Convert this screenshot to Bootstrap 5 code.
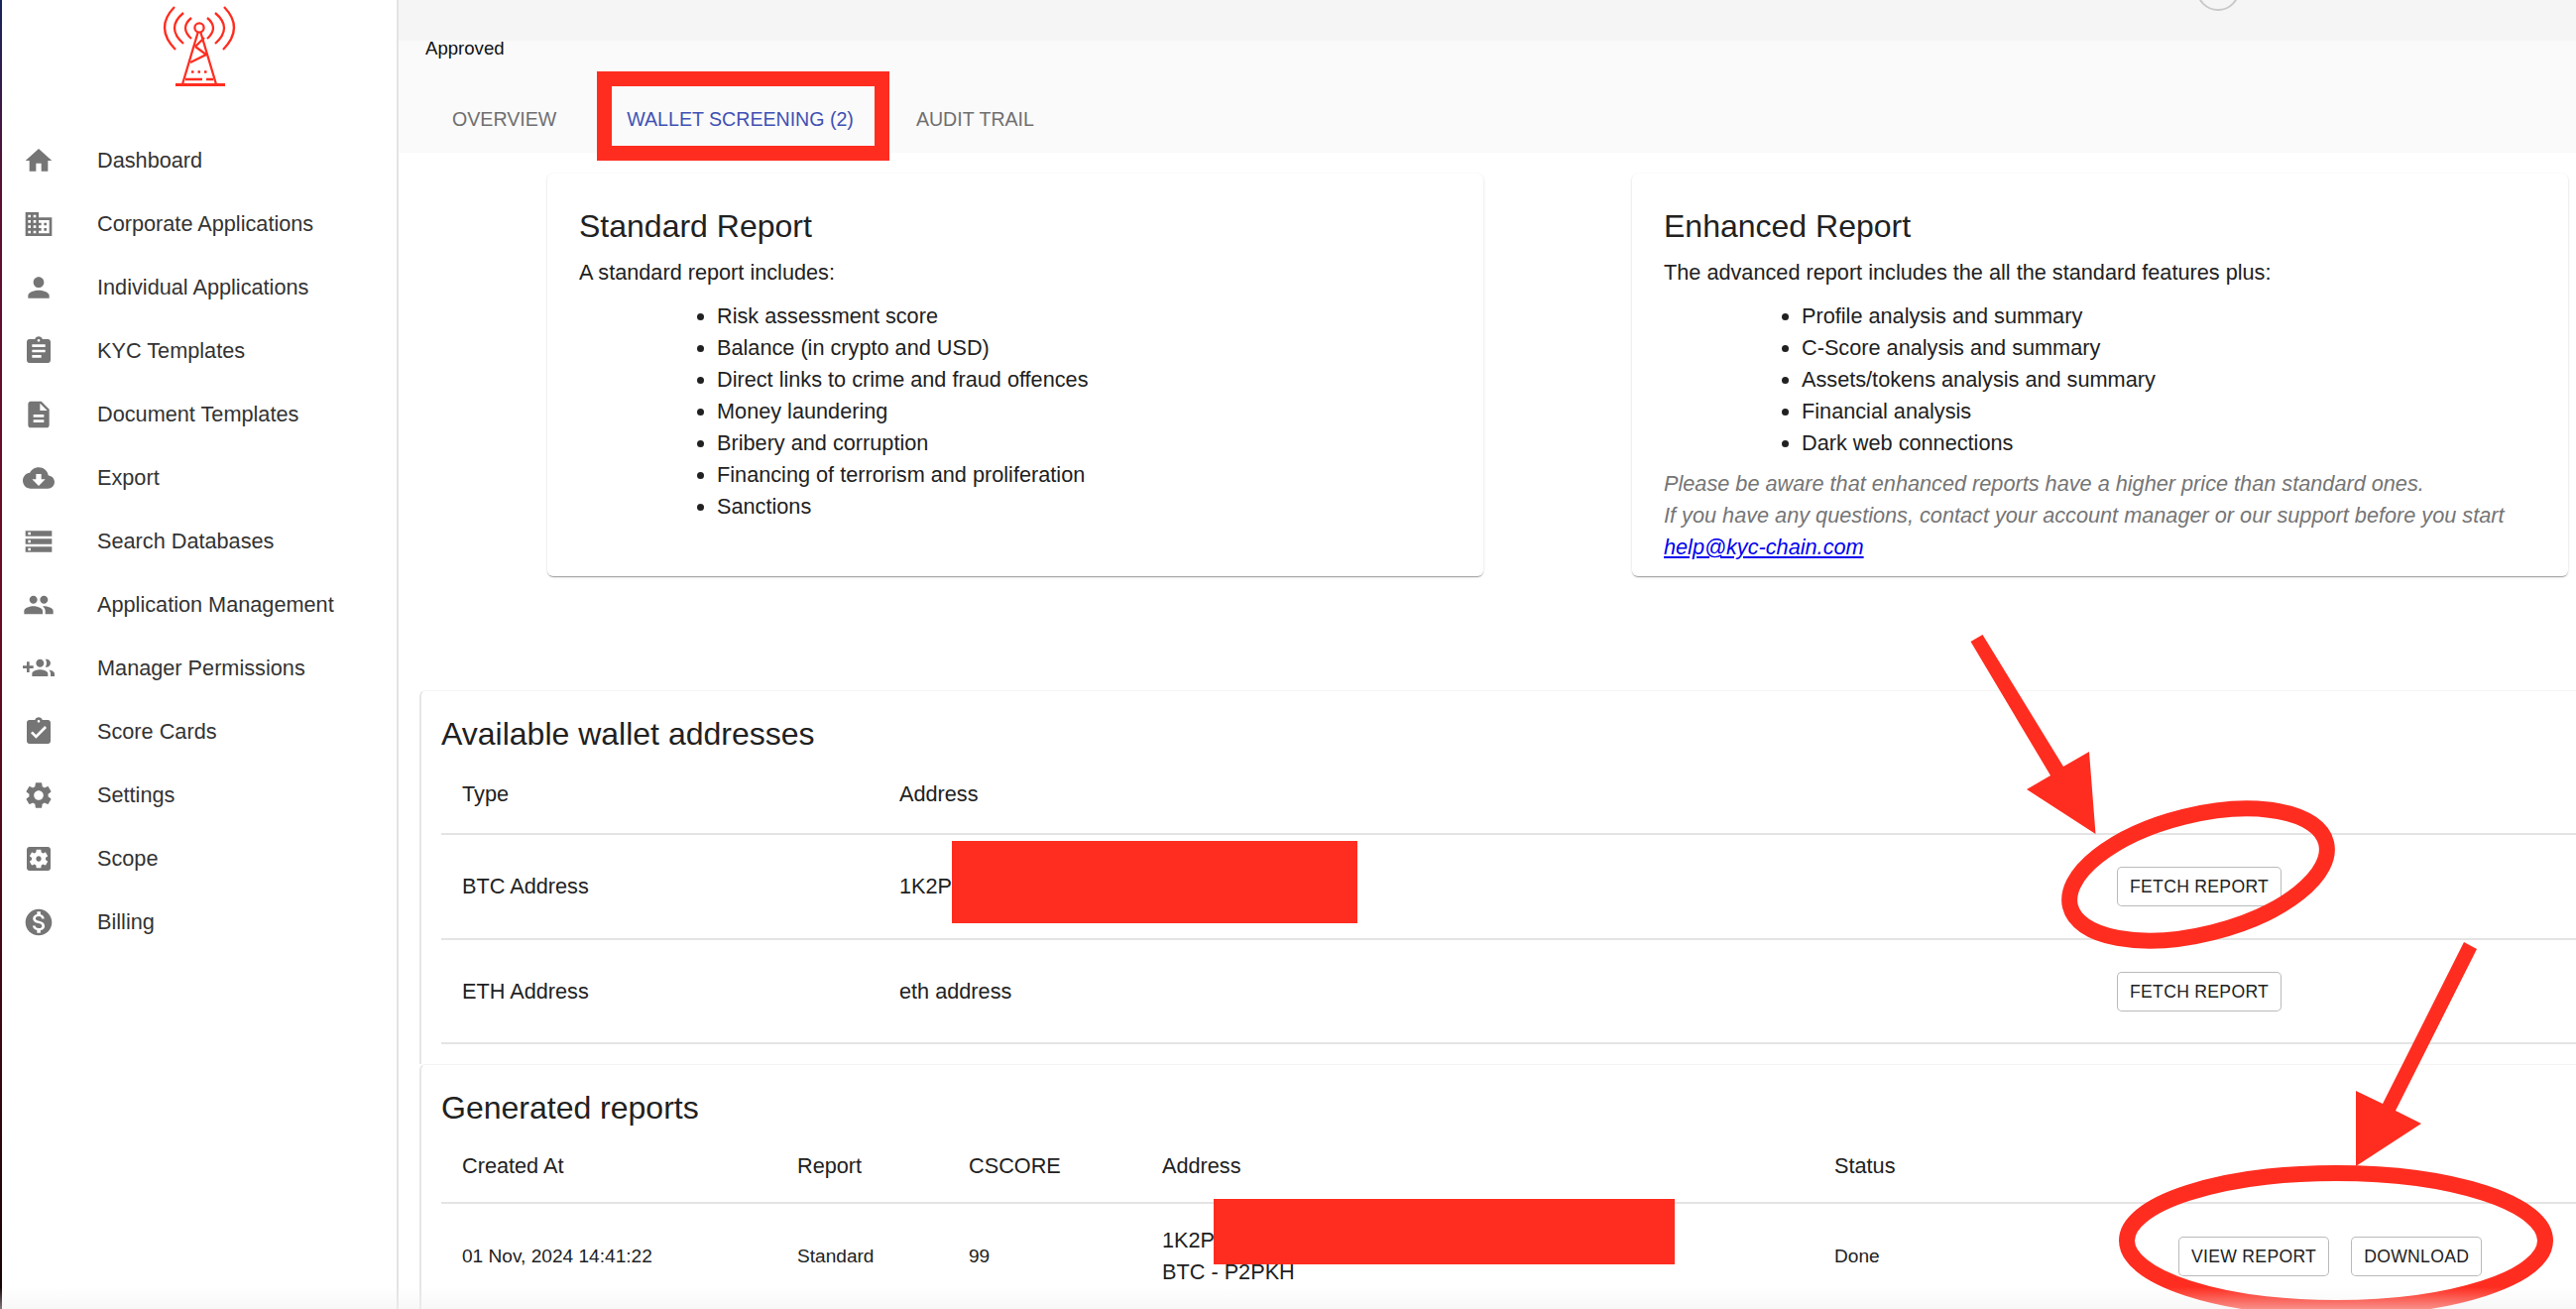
<!DOCTYPE html>
<html lang="en">
<head>
<meta charset="utf-8">
<title>Wallet screening</title>
<link rel="stylesheet" href="https://cdn.jsdelivr.net/npm/bootstrap@5.3.0/dist/css/bootstrap.min.css">
<style>
html,body{height:100%;overflow:hidden;}
body{font-family:"Liberation Sans",Arial,sans-serif;color:#212121;background:#fff;position:relative;font-size:21.7px;line-height:32px;}
.shell{height:1320px;width:2598px;}
.side{width:400px;flex:none;border-left:2px solid;border-image:linear-gradient(180deg,#16265c 0,#5d0f33 15%,#6b0c24 45%,#3a0712 80%,#140406 100%) 1;border-right:0;background:#fff;}
.side-edge{width:2px;flex:none;background:#e3e3e3;}
.brand{display:block;width:100px;height:100px;margin:0 0 30px 148px;}
.side-link{height:64px;display:flex;align-items:center;padding-left:21px;color:#333;text-decoration:none;font-size:21.7px;}
.side-ico{width:32px;height:32px;fill:#757575;flex:none;margin-right:43px;}
.page{flex:1 1 auto;min-width:0;overflow:hidden;}
.topbar{height:41px;background:#f5f5f5;overflow:hidden;padding-right:339px;}
.avatar{width:44px;height:44px;border:2px solid #c9c9c9;border-radius:50%;margin-bottom:30px;flex:none;}
.subbar{height:113px;background:#fafafa;display:flow-root;}
.state{padding:0 0 0 27px;margin-top:-4px;font-size:18.6px;line-height:24px;height:24px;color:#111;}
.tabrow{margin-top:47px;padding-left:54px;}
.tabrow .nav-link{padding:0;font-size:19.6px;line-height:24px;color:#6f6f6f;text-transform:uppercase;}
.tabrow .nav-link.active{color:#3f51b5;}
.tabrow .nav-item:nth-child(1){margin-right:71px;}
.tabrow .nav-item:nth-child(2){margin-right:63px;}
.body-pane{background:#fff;height:1166px;}
.promo-row{padding:21px 8px 0 150px;gap:150px;}
.promo{flex:1 1 0;height:406px;padding:34px 32px 0;border:0;border-radius:6px;box-shadow:0 2px 1px -1px rgba(0,0,0,.2),0 1px 1px rgba(0,0,0,.14),0 1px 3px rgba(0,0,0,.12);}
.promo h4,.sheet h4{font-size:32px;line-height:38px;margin:0;font-weight:400;color:#212121;}
.promo p{margin:12px 0 12px;}
.promo ul{margin:0;padding-left:139px;}
.promo-note{margin:9px 0 0;font-style:italic;color:#757575;}
.promo-note a{color:#0000ee;}
.sheet{border:0;border-left:2px solid #e6e6e6;border-top:1px solid #f4f4f4;border-radius:6px 0 0 0;margin-left:21px;width:2175px;padding:24px 0 0 20px;background:#fff;}
.sheet-a{margin-top:115px;height:377px;}
.sheet-b{height:260px;}
.grid-tb{width:2153px;table-layout:fixed;margin:0;--bs-table-border-color:#e0e0e0;}
.grid-tb th,.grid-tb td{padding:0 0 0 21px;vertical-align:middle;font-weight:400;border-bottom:2px solid #e4e4e4;color:#212121;}
.grid-tb thead th{height:82px;padding-top:3px;}
.sheet-a tbody tr:first-child td{height:106px;}
.sheet-a tbody tr:last-child td{height:105px;}
.sheet-b thead th{height:77px;}
.sheet-b tbody td{height:106px;border-bottom:0;}
.sheet-b tbody td.tiny{font-size:19.1px;}
.w441{width:441px}.w1228{width:1228px}.w484{width:484px}
.w338{width:338px}.w173{width:173px}.w195{width:195px}.w678{width:678px}.w347{width:347px}.w422{width:422px}
.act{height:40px;padding:0 12px;border:1px solid rgba(0,0,0,.27);border-radius:5px;background:#fff;color:#212121;font-size:17.6px;line-height:38px;letter-spacing:.3px;white-space:nowrap;}
.act+.act{margin-left:22px;}
.markup{position:absolute;left:0;top:0;width:2598px;height:1320px;pointer-events:none;}
.foot-fade{position:absolute;left:0;right:0;bottom:0;height:22px;background:linear-gradient(180deg,rgba(240,240,240,0),rgba(240,240,240,.5));pointer-events:none;}
</style>
</head>
<body>
<div class="shell d-flex">
  <aside class="side">
    <svg class="brand" viewBox="0 0 100 100" fill="none" stroke="#ff2d20" stroke-width="2.3" aria-label="logo">
      <circle cx="51" cy="28" r="4.6"/>
      <path d="M26 7Q5.500 28 27 50M76 7Q96.500 28 75 50M35 13Q17 28 35 44M67 13Q85 28 67 44M43 18Q31 28 43 39M59 18Q71 28 59 39"/>
      <path d="M49.500 33L34 85M52.500 33L68 85M47 47L58 55L42 63M47 47L56 38" />
      <path d="M27 85.500H77" stroke-width="2.800"/>
      <path d="M43 72.500H60" stroke-dasharray="2.500 4" />
      <path d="M37 80H54M58 80H65"/>
    </svg>
    <nav class="nav flex-column">
      <a class="side-link" href="#"><svg class="side-ico" viewBox="0 0 24 24"><path d="M10 20v-6h4v6h5v-8h3L12 3 2 12h3v8z"/></svg>Dashboard</a>
      <a class="side-link" href="#"><svg class="side-ico" viewBox="0 0 24 24"><path d="M12 7V3H2v18h20V7H12zM6 19H4v-2h2v2zm0-4H4v-2h2v2zm0-4H4V9h2v2zm0-4H4V5h2v2zm4 12H8v-2h2v2zm0-4H8v-2h2v2zm0-4H8V9h2v2zm0-4H8V5h2v2zm10 12h-8v-2h2v-2h-2v-2h2v-2h-2V9h8v10zm-2-8h-2v2h2v-2zm0 4h-2v2h2v-2z"/></svg>Corporate Applications</a>
      <a class="side-link" href="#"><svg class="side-ico" viewBox="0 0 24 24"><path d="M12 12c2.210 0 4-1.790 4-4s-1.790-4-4-4-4 1.790-4 4 1.790 4 4 4zm0 2c-2.670 0-8 1.340-8 4v2h16v-2c0-2.660-5.330-4-8-4z"/></svg>Individual Applications</a>
      <a class="side-link" href="#"><svg class="side-ico" viewBox="0 0 24 24"><path d="M19 3h-4.180C14.400 1.840 13.300 1 12 1c-1.300 0-2.400.84-2.820 2H5c-1.100 0-2 .9-2 2v14c0 1.100.9 2 2 2h14c1.100 0 2-.9 2-2V5c0-1.100-.9-2-2-2zm-7 0c.55 0 1 .45 1 1s-.45 1-1 1-1-.45-1-1 .45-1 1-1zm2 14H7v-2h7v2zm3-4H7v-2h10v2zm0-4H7V7h10v2z"/></svg>KYC Templates</a>
      <a class="side-link" href="#"><svg class="side-ico" viewBox="0 0 24 24"><path d="M14 2H6c-1.100 0-1.990.9-1.990 2L4 20c0 1.100.89 2 1.990 2H18c1.100 0 2-.9 2-2V8l-6-6zm2 16H8v-2h8v2zm0-4H8v-2h8v2zm-3-5V3.500L18.500 9H13z"/></svg>Document Templates</a>
      <a class="side-link" href="#"><svg class="side-ico" viewBox="0 0 24 24"><path d="M19.350 10.040C18.670 6.590 15.640 4 12 4 9.110 4 6.600 5.640 5.350 8.040 2.340 8.360 0 10.910 0 14c0 3.310 2.690 6 6 6h13c2.760 0 5-2.240 5-5 0-2.640-2.050-4.780-4.650-4.960zM17 13l-5 5-5-5h3V9h4v4h3z"/></svg>Export</a>
      <a class="side-link" href="#"><svg class="side-ico" viewBox="0 0 24 24"><path d="M2 20h20v-4H2v4zm2-3h2v2H4v-2zM2 4v4h20V4H2zm4 3H4V5h2v2zm-4 7h20v-4H2v4zm2-3h2v2H4v-2z"/></svg>Search Databases</a>
      <a class="side-link" href="#"><svg class="side-ico" viewBox="0 0 24 24"><path d="M16 11c1.660 0 2.990-1.340 2.990-3S17.660 5 16 5c-1.660 0-3 1.340-3 3s1.340 3 3 3zm-8 0c1.660 0 2.990-1.340 2.990-3S9.660 5 8 5C6.340 5 5 6.340 5 8s1.340 3 3 3zm0 2c-2.330 0-7 1.170-7 3.500V19h14v-2.500c0-2.330-4.670-3.500-7-3.500zm8 0c-.29 0-.62.02-.97.05 1.160.84 1.970 1.970 1.970 3.450V19h6v-2.500c0-2.330-4.670-3.500-7-3.500z"/></svg>Application Management</a>
      <a class="side-link" href="#"><svg class="side-ico" viewBox="0 0 24 24"><path d="M8 10H5V7H3v3H0v2h3v3h2v-3h3v-2zm10 1c1.660 0 2.990-1.340 2.990-3S19.660 5 18 5c-.32 0-.63.05-.91.14.57.81.9 1.790.9 2.860s-.34 2.040-.9 2.860c.28.09.59.14.91.14zm-5 0c1.660 0 2.990-1.340 2.990-3S14.660 5 13 5s-3 1.340-3 3 1.340 3 3 3zm6.620 2.160c.83.73 1.380 1.660 1.380 2.840v2h3v-2c0-1.540-2.370-2.490-4.380-2.840zM13 13c-2 0-6 1-6 3v2h12v-2c0-2-4-3-6-3z"/></svg>Manager Permissions</a>
      <a class="side-link" href="#"><svg class="side-ico" viewBox="0 0 24 24"><path d="M19 3h-4.180C14.400 1.840 13.300 1 12 1c-1.300 0-2.400.84-2.820 2H5c-1.100 0-2 .9-2 2v14c0 1.100.9 2 2 2h14c1.100 0 2-.9 2-2V5c0-1.100-.9-2-2-2zm-7 0c.55 0 1 .45 1 1s-.45 1-1 1-1-.45-1-1 .45-1 1-1zm-2 14l-4-4 1.410-1.410L10 14.170l6.590-6.590L18 9l-8 8z"/></svg>Score Cards</a>
      <a class="side-link" href="#"><svg class="side-ico" viewBox="0 0 24 24"><path d="M19.140 12.940c.04-.3.06-.61.06-.94 0-.32-.02-.64-.07-.94l2.030-1.580c.18-.14.23-.41.12-.61l-1.920-3.320c-.12-.22-.37-.29-.59-.22l-2.390.96c-.5-.38-1.030-.7-1.620-.94l-.36-2.540c-.04-.24-.24-.41-.48-.41h-3.840c-.24 0-.43.17-.47.41l-.36 2.540c-.59.24-1.130.57-1.620.94l-2.390-.96c-.22-.08-.47 0-.59.22L2.740 8.870c-.12.21-.08.47.12.61l2.030 1.580c-.05.3-.09.63-.09.94s.02.64.07.94l-2.030 1.580c-.18.14-.23.41-.12.61l1.920 3.320c.12.22.37.29.59.22l2.390-.96c.5.38 1.030.7 1.620.94l.36 2.540c.05.24.24.41.48.41h3.840c.24 0 .44-.17.47-.41l.36-2.540c.59-.24 1.130-.56 1.620-.94l2.390.96c.22.08.47 0 .59-.22l1.920-3.320c.12-.22.07-.47-.12-.61l-2.010-1.580zM12 15.600c-1.980 0-3.600-1.620-3.600-3.600s1.620-3.600 3.600-3.600 3.600 1.620 3.600 3.600-1.620 3.600-3.600 3.600z"/></svg>Settings</a>
      <a class="side-link" href="#"><svg class="side-ico" viewBox="0 0 24 24"><path d="M12 10c-1.100 0-2 .9-2 2s.9 2 2 2 2-.9 2-2-.9-2-2-2zm7-7H5c-1.110 0-2 .9-2 2v14c0 1.100.89 2 2 2h14c1.110 0 2-.9 2-2V5c0-1.100-.89-2-2-2zm-1.750 9c0 .23-.02.46-.05.68l1.480 1.160c.13.11.17.3.08.45l-1.400 2.420c-.09.15-.27.21-.43.15l-1.740-.7c-.36.28-.76.51-1.180.69l-.26 1.850c-.03.17-.18.3-.35.3h-2.800c-.17 0-.32-.13-.35-.29l-.26-1.850c-.43-.18-.82-.41-1.180-.69l-1.740.7c-.16.06-.34 0-.43-.15l-1.400-2.420c-.09-.15-.05-.34.08-.45l1.480-1.160c-.03-.23-.05-.46-.05-.69 0-.23.02-.46.05-.68l-1.480-1.160c-.13-.11-.17-.3-.08-.45l1.400-2.420c.09-.15.27-.21.43-.15l1.740.7c.36-.28.76-.51 1.180-.69l.26-1.850c.03-.17.18-.3.35-.3h2.800c.17 0 .32.13.35.29l.26 1.850c.43.18.82.41 1.180.69l1.740-.7c.16-.06.34 0 .43.15l1.400 2.420c.09.15.05.34-.08.45l-1.480 1.160c.03.23.05.46.05.69z"/></svg>Scope</a>
      <a class="side-link" href="#"><svg class="side-ico" viewBox="0 0 24 24"><path d="M12 2C6.480 2 2 6.480 2 12s4.480 10 10 10 10-4.480 10-10S17.520 2 12 2zm1.410 16.090V20h-2.670v-1.930c-1.710-.36-3.160-1.460-3.270-3.400h1.960c.1 1.050.82 1.870 2.650 1.870 1.960 0 2.400-.98 2.400-1.590 0-.83-.44-1.610-2.670-2.140-2.480-.6-4.180-1.620-4.180-3.670 0-1.720 1.390-2.840 3.110-3.210V4h2.670v1.950c1.860.45 2.790 1.860 2.870 3.390H14.300c-.05-1.110-.64-1.870-2.220-1.870-1.500 0-2.400.68-2.400 1.640 0 .84.65 1.390 2.670 1.910s4.180 1.390 4.180 3.910c-.01 1.830-1.380 2.840-3.120 3.160z"/></svg>Billing</a>
    </nav>
  </aside>
  <div class="side-edge"></div>
  <main class="page">
    <div class="topbar d-flex justify-content-end align-items-end"><div class="avatar"></div></div>
    <div class="subbar">
      <div class="state">Approved</div>
      <ul class="nav tabrow">
        <li class="nav-item"><a class="nav-link" href="#">Overview</a></li>
        <li class="nav-item"><a class="nav-link active" href="#">Wallet Screening (2)</a></li>
        <li class="nav-item"><a class="nav-link" href="#">Audit Trail</a></li>
      </ul>
    </div>
    <div class="body-pane">
      <div class="d-flex promo-row">
        <section class="card promo">
          <h4>Standard Report</h4>
          <p>A standard report includes:</p>
          <ul>
            <li>Risk assessment score</li>
            <li>Balance (in crypto and USD)</li>
            <li>Direct links to crime and fraud offences</li>
            <li>Money laundering</li>
            <li>Bribery and corruption</li>
            <li>Financing of terrorism and proliferation</li>
            <li>Sanctions</li>
          </ul>
        </section>
        <section class="card promo">
          <h4>Enhanced Report</h4>
          <p>The advanced report includes the all the standard features plus:</p>
          <ul>
            <li>Profile analysis and summary</li>
            <li>C-Score analysis and summary</li>
            <li>Assets/tokens analysis and summary</li>
            <li>Financial analysis</li>
            <li>Dark web connections</li>
          </ul>
          <div class="promo-note">Please be aware that enhanced reports have a higher price than standard ones.<br>If you have any questions, contact your account manager or our support before you start<br><a href="#">help@kyc-chain.com</a></div>
        </section>
      </div>
      <section class="card sheet sheet-a">
        <h4>Available wallet addresses</h4>
        <table class="table grid-tb">
          <colgroup><col class="w441"><col class="w1228"><col class="w484"></colgroup>
          <thead><tr><th>Type</th><th>Address</th><th></th></tr></thead>
          <tbody>
            <tr><td>BTC Address</td><td>1K2P</td><td><button class="btn act" type="button">FETCH REPORT</button></td></tr>
            <tr><td>ETH Address</td><td>eth address</td><td><button class="btn act" type="button">FETCH REPORT</button></td></tr>
          </tbody>
        </table>
      </section>
      <section class="card sheet sheet-b">
        <h4>Generated reports</h4>
        <table class="table grid-tb">
          <colgroup><col class="w338"><col class="w173"><col class="w195"><col class="w678"><col class="w347"><col class="w422"></colgroup>
          <thead><tr><th>Created At</th><th>Report</th><th>CSCORE</th><th>Address</th><th>Status</th><th></th></tr></thead>
          <tbody>
            <tr><td class="tiny">01 Nov, 2024 14:41:22</td><td class="tiny">Standard</td><td class="tiny">99</td><td>1K2P<br>BTC - P2PKH</td><td class="tiny">Done</td><td><button class="btn act" type="button">VIEW REPORT</button><button class="btn act" type="button">DOWNLOAD</button></td></tr>
          </tbody>
        </table>
      </section>
    </div>
  </main>
</div>
<svg class="markup" viewBox="0 0 2598 1320" aria-hidden="true">
  <g fill="#ff2d20">
    <path fill-rule="evenodd" d="M602 72H897V162H602ZM617 87V147H882V87Z"/>
    <rect x="960" y="848" width="409" height="83"/>
    <rect x="1224" y="1209" width="465" height="66"/>
    <polygon points="1987.5,647 1999.5,640 2081,773 2107,758 2113.5,841 2044,796 2068,782"/>
    <polygon points="2485,950 2498,957 2416,1120 2442,1133 2376,1176 2376,1100 2403,1113"/>
  </g>
  <g fill="none" stroke="#ff2d20" stroke-width="16">
    <ellipse cx="2217" cy="882" rx="133" ry="60" transform="rotate(-14 2217 882)"/>
    <ellipse cx="2356" cy="1251" rx="211" ry="68"/>
  </g>
</svg>
<div class="foot-fade"></div>
<script src="https://cdn.jsdelivr.net/npm/bootstrap@5.3.0/dist/js/bootstrap.bundle.min.js"></script>
</body>
</html>
